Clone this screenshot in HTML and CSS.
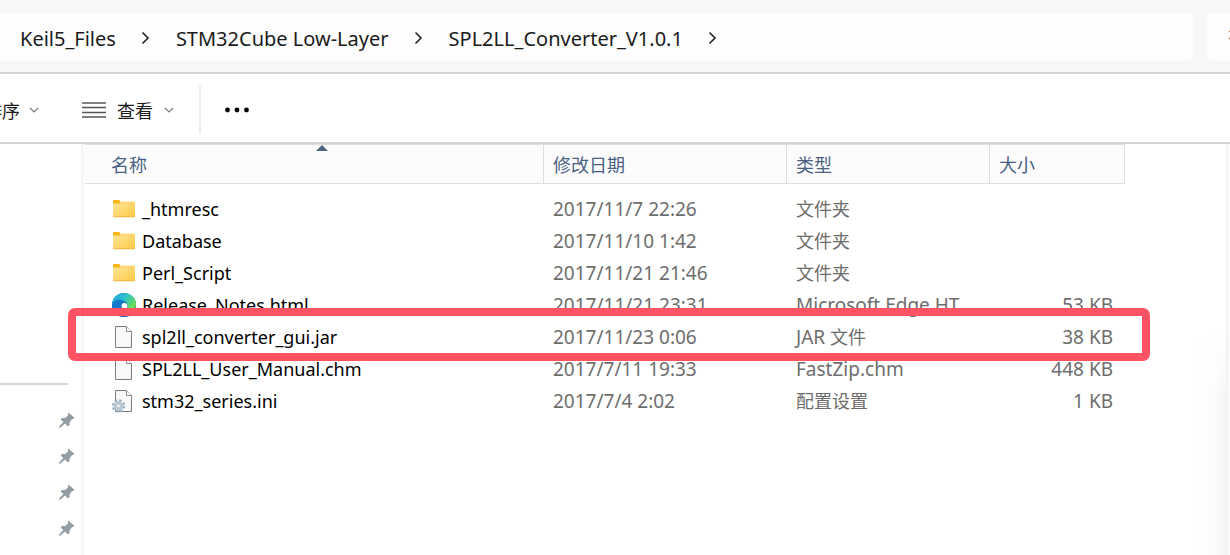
FILE: index.html
```html
<!DOCTYPE html>
<html lang="zh-CN">
<head>
  <meta charset="UTF-8">
  <title>SPL2LL_Converter_V1.0.1</title>
  <meta name="viewport" content="width=device-width, initial-scale=1">
  <link rel="stylesheet" href="styles.css">
</head>
<body>
  <svg class="defs" width="0" height="0">
    <defs>
      <linearGradient id="folderFill" x1="0" y1="0" x2="1" y2="1">
        <stop offset="0" stop-color="#ffe49b"/>
        <stop offset="1" stop-color="#ffcb45"/>
      </linearGradient>
      <linearGradient id="edgeTop" x1="0" y1="0" x2="1" y2="0.6">
        <stop offset="0" stop-color="#1b9de2"/>
        <stop offset="0.5" stop-color="#2fc2cf"/>
        <stop offset="1" stop-color="#6be04f"/>
      </linearGradient>
      <symbol id="chevron" viewBox="0 0 10 14"><path d="M1.500 1.500l5.500 5.500-5.500 5.500" fill="none" stroke="#222" stroke-width="1.6"/></symbol>
      <symbol id="down" viewBox="0 0 10 6"><path d="M1 1l4 4 4-4" fill="none" stroke="#777" stroke-width="1.1"/></symbol>
      <symbol id="folder" viewBox="0 0 24 24">
        <path d="M1 4q0-1 1-1h5l2 2v5h-8z" fill="#f9b516"/>
        <path d="M1 6.500h6l2-2h13q1 0 1 1v13.500q0 1-1 1h-20q-1 0-1-1z" fill="url(#folderFill)"/>
        <path d="M1 18.800q0 1 1 1h20q1 0 1-1" fill="none" stroke="#e2ae35" stroke-width="0.8"/>
      </symbol>
      <symbol id="page" viewBox="0 0 24 24">
        <path d="M3.500 1.500h11l5 5v16h-16z" fill="#f9f9f9" stroke="#7d7d7d"/>
        <path d="M14.500 1.500v5h5" fill="#fff" stroke="#8b8b8b"/>
      </symbol>
      <symbol id="edge" viewBox="0 0 24 24">
        <circle cx="12" cy="12" r="12" fill="#0c59a4"/>
        <path d="M0 11C1 4 6 0 12 0c7 0 12 5 12 11 0 4-3 6-6 6-2 0-4-1-3-2 2-3 0-7-5-7-5 0-9 2-10 5z" fill="url(#edgeTop)"/>
        <path d="M0 12c1-4 5-6 9-5 3 0 5 2 5 4-3-1-5 1-5 4 0 4 3 7 6 8-8 3-15-3-15-11z" fill="#1479cf"/>
        <circle cx="12.500" cy="13" r="3" fill="#fff"/>
      </symbol>
      <symbol id="config" viewBox="0 0 24 24">
        <path d="M3.500 1.500h11l5 5v16h-16z" fill="#f9f9f9" stroke="#7d7d7d"/>
        <path d="M14.500 1.500v5h5" fill="#fff" stroke="#8b8b8b"/>
        <circle cx="6.500" cy="17" r="5.500" fill="none" stroke="#9db0be" stroke-width="2.400" stroke-dasharray="2.400 1.920"/>
        <circle cx="6.500" cy="17" r="3.600" fill="#f4f7f9" stroke="#b9c9d5" stroke-width="2.800"/>
        <circle cx="6.500" cy="17" r="1.900" fill="#f4f7f9" stroke="#8fa2b0" stroke-width="0.600"/>
      </symbol>
      <symbol id="pin" viewBox="0 0 16 16">
        <path d="M9.500 0.500l6 5.500-1.500 1-1 0-2.500 3.500 0 2.500-1.500 1.500-3-3-4.500 4-1.500 0.500 0.500-2 4-4-3-2.500 1.500-1.500h3l3-2.500 0-1.500z" fill="#939da4"/>
      </symbol>
    </defs>
  </svg>

  <header class="address-row">
    <nav class="breadcrumb">
      <a href="#">Keil5_Files</a>
      <svg class="chevron"><use href="#chevron"/></svg>
      <a href="#">STM32Cube Low-Layer</a>
      <svg class="chevron"><use href="#chevron"/></svg>
      <a href="#">SPL2LL_Converter_V1.0.1</a>
      <svg class="chevron"><use href="#chevron"/></svg>
    </nav>
    <input class="search" type="text" aria-label="搜索" placeholder="在">
  </header>

  <div class="toolbar">
    <button class="sort"><span>排序</span><svg class="down"><use href="#down"/></svg></button>
    <button class="view">
      <svg class="lines" viewBox="0 0 24 16"><path d="M0 1h24M0 5.500h24M0 10.500h24M0 15h24" stroke="#555" stroke-width="1.500"/></svg>
      <span>查看</span>
      <svg class="down"><use href="#down"/></svg>
    </button>
    <button class="more" aria-label="更多">
      <svg viewBox="0 0 24 6"><circle cx="2.500" cy="3" r="2.400"/><circle cx="12" cy="3" r="2.400"/><circle cx="21.500" cy="3" r="2.400"/></svg>
    </button>
  </div>

  <main class="explorer">
    <aside class="sidebar">
      <svg class="pin"><use href="#pin"/></svg>
      <svg class="pin"><use href="#pin"/></svg>
      <svg class="pin"><use href="#pin"/></svg>
      <svg class="pin"><use href="#pin"/></svg>
    </aside>
    <section class="content">
      <table class="files">
        <thead>
          <tr>
            <th class="col-name">名称<svg class="sorted" viewBox="0 0 12 6"><path d="M0 6l6-6 6 6z" fill="#4a6184"/></svg></th>
            <th class="col-date">修改日期</th>
            <th class="col-type">类型</th>
            <th class="col-size">大小</th>
          </tr>
        </thead>
        <tbody>
          <tr>
            <td><div class="name"><svg><use href="#folder"/></svg>_htmresc</div></td>
            <td>2017/11/7 22:26</td>
            <td class="zh">文件夹</td>
            <td></td>
          </tr>
          <tr>
            <td><div class="name"><svg><use href="#folder"/></svg>Database</div></td>
            <td>2017/11/10 1:42</td>
            <td class="zh">文件夹</td>
            <td></td>
          </tr>
          <tr>
            <td><div class="name"><svg><use href="#folder"/></svg>Perl_Script</div></td>
            <td>2017/11/21 21:46</td>
            <td class="zh">文件夹</td>
            <td></td>
          </tr>
          <tr>
            <td><div class="name"><svg><use href="#edge"/></svg>Release_Notes.html</div></td>
            <td>2017/11/21 23:31</td>
            <td>Microsoft Edge HT</td>
            <td class="size">53 KB</td>
          </tr>
          <tr class="marked">
            <td><div class="name"><svg><use href="#page"/></svg>spl2ll_converter_gui.jar</div></td>
            <td>2017/11/23 0:06</td>
            <td>JAR <span class="zh">文件</span></td>
            <td class="size">38 KB</td>
          </tr>
          <tr>
            <td><div class="name"><svg><use href="#page"/></svg>SPL2LL_User_Manual.chm</div></td>
            <td>2017/7/11 19:33</td>
            <td>FastZip.chm</td>
            <td class="size">448 KB</td>
          </tr>
          <tr>
            <td><div class="name"><svg><use href="#config"/></svg>stm32_series.ini</div></td>
            <td>2017/7/4 2:02</td>
            <td class="zh">配置设置</td>
            <td class="size">1 KB</td>
          </tr>
        </tbody>
      </table>
    </section>
  </main>
</body>
</html>
```
FILE: styles.css
```css
* { box-sizing: border-box; }
body {
  margin: 0;
  min-height: 100vh;
  display: flex;
  flex-direction: column;
  overflow: hidden;
  background: #fff;
  color: #1b1b1b;
  font-family: "Noto Sans", "Noto Sans CJK SC", sans-serif;
  font-size: 19px;
}
button { border: 0; padding: 0; background: none; font: inherit; color: inherit; cursor: pointer; }
.defs { position: absolute; }

/* address bar */
.address-row {
  display: flex;
  gap: 12px;
  height: 74px;
  padding-top: 13px;
  background: #f7f7f7;
  border-bottom: 2px solid #d4d4d4;
}
.breadcrumb {
  flex: 1;
  display: flex;
  align-items: center;
  height: 48px;
  padding: 2px 0 0 20px;
  background: #fdfdfd;
  border-radius: 0 6px 6px 0;
  font-size: 20px;
}
.breadcrumb a { color: inherit; text-decoration: none; white-space: nowrap; }
.chevron { width: 10px; height: 14px; margin: 0 25px; }
.search {
  width: 24px;
  height: 48px;
  padding: 0 0 0 22px;
  border: 0;
  border-radius: 6px 0 0 6px;
  background: #fdfdfd;
  font: inherit;
}

/* command bar */
.toolbar {
  display: flex;
  align-items: center;
  height: 70px;
  padding-top: 3px;
  border-bottom: 2px solid #d4d4d4;
  font-size: 18px;
}
.toolbar button { display: flex; align-items: center; }
.sort { margin-left: -16px; gap: 9px; }
.down { width: 10px; height: 6px; }
.view { height: 48px; margin-left: 43px; padding-right: 25px; border-right: 2px solid #ececec; }
.toolbar .view { gap: 11px; padding-right: 25px; }
.lines { width: 24px; height: 16px; }
.more { margin-left: 24px; }
.more svg { width: 24px; height: 6px; }

/* panes */
.explorer { flex: 1; display: flex; }
.sidebar {
  width: 84px;
  padding: 268px 6px 0 0;
  border-right: 3px solid #f7f7f7;
  display: flex;
  flex-direction: column;
  align-items: flex-end;
  gap: 20px;
  background: linear-gradient(#d4d4d4, #d4d4d4) 0 239px / 68px 2px no-repeat;
}
.pin { width: 16px; height: 16px; flex: none; }
.content {
  flex: 1;
  margin-right: 1px;
  padding: 0 101px 0 1px;
  border-right: 3px solid #f5f5f5;
  background:
    linear-gradient(#fff 190px, transparent 260px),
    linear-gradient(to left, #f4f4f4, #fcfcfc 12px, #fff 30px);
}

.files { width: 100%; table-layout: fixed; border-collapse: separate; border-spacing: 0; }
.files th {
  position: relative;
  height: 40px;
  padding: 2px 9px 0;
  border: 1px solid #dedede;
  border-left: 0;
  background: #fcfcfc;
  color: #4a6184;
  font-size: 18px;
  font-weight: 400;
  line-height: 24px;
  text-align: left;
}
.files th.col-name { padding-left: 26px; }
.col-date { width: 243px; }
.col-type { width: 203px; }
.col-size { width: 135px; }
.sorted { position: absolute; top: 0; left: 50%; width: 12px; height: 6px; margin-left: 2px; }
.files tbody::before { content: ""; display: table-row; height: 9px; }
.files td { height: 32px; padding: 0 9px; color: #6d6d6d; line-height: 26px; white-space: nowrap; }
.files .size { padding-right: 12px; text-align: right; }
.files .zh { font-size: 18px; }
.name { display: flex; align-items: center; gap: 6px; padding-left: 18px; color: #000; font-size: 18px; }
.name svg { width: 24px; height: 24px; flex: none; }

/* red frame around the jar file */
.marked { position: relative; }
.marked td:first-child::after {
  content: "";
  position: absolute;
  inset: -13px -25px -8px -17px;
  border: 8px solid #ff5263;
  border-radius: 7px;
}
```
